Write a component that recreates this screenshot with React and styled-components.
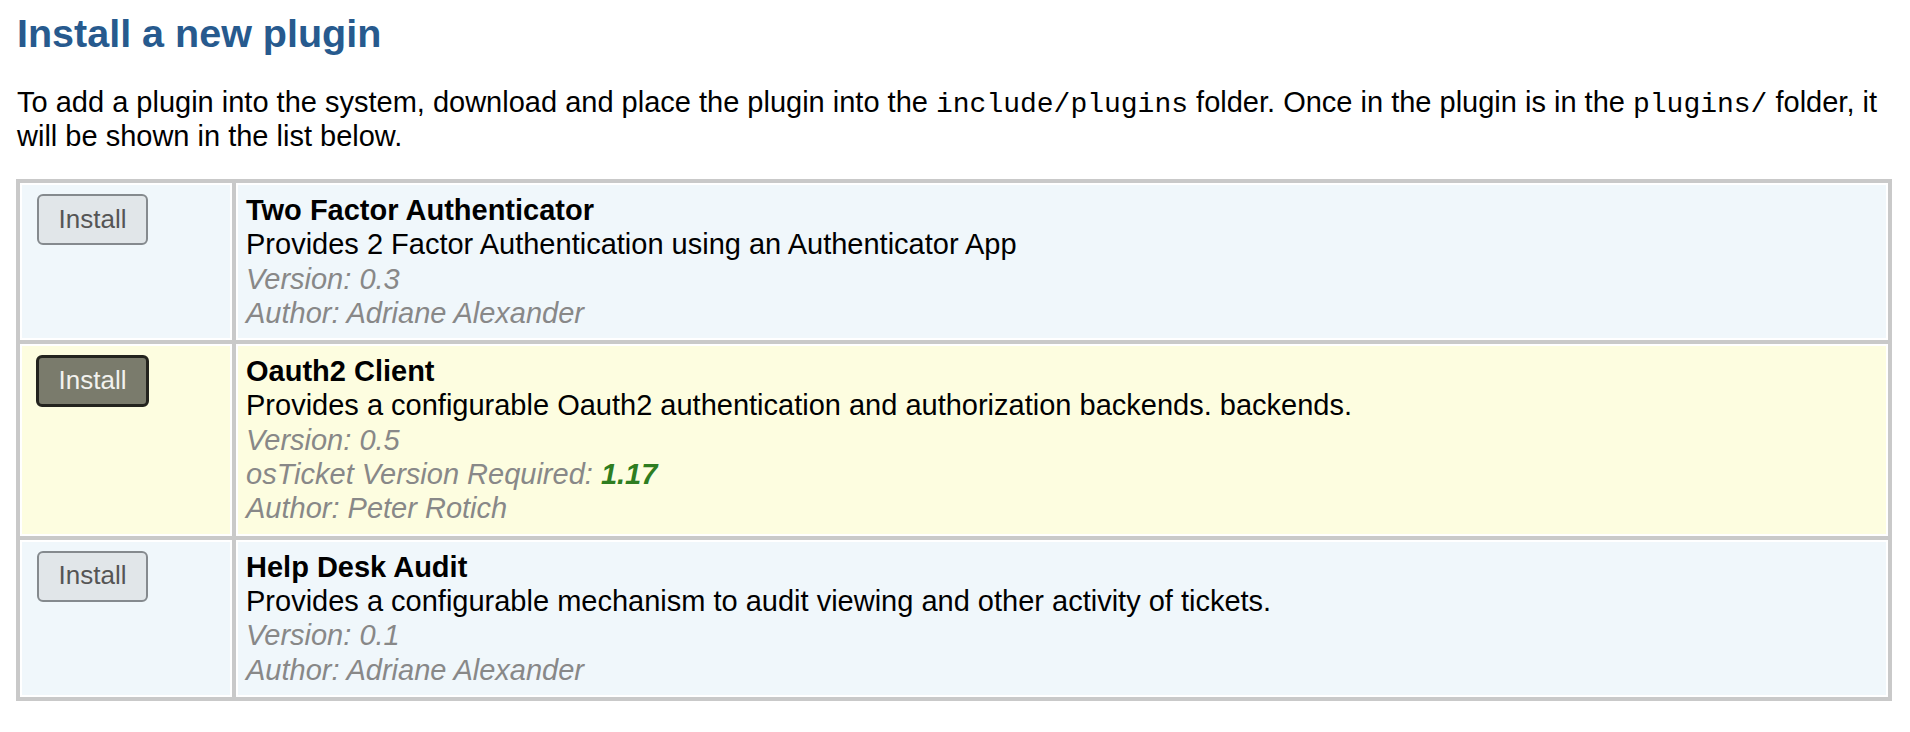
import React from "react";
import styled, { createGlobalStyle } from "styled-components";

const GlobalStyle = createGlobalStyle`
  html, body { margin: 0; padding: 0; background: #ffffff; }
  body { font-family: "Liberation Sans", Arial, Helvetica, sans-serif; color: #000; }
`;

const Page = styled.div`
  padding: 10px 18px 0 16px;
`;

const Title = styled.h2`
  margin: 0 0 0 1px;
  font-size: 39.5px;
  line-height: 46px;
  font-weight: bold;
  color: #275a8e;
`;

const Intro = styled.p`
  margin: 29px 0 26px 1px;
  font-size: 29px;
  line-height: 34px;
`;

const Code = styled.code`
  font-family: "Liberation Mono", "Courier New", monospace;
  font-size: 28px;
  line-height: 0;
`;

const PluginTable = styled.div`
  display: grid;
  grid-template-columns: 212px 1fr;
  gap: 4px;
  padding: 4px;
  background: #c9c9c9;
`;

const Cell = styled.div`
  border: 2px solid #ffffff;
  padding: 8px;
  background: ${(p) => (p.$highlight ? "#fdfde0" : "#f0f7fb")};
  font-size: 29px;
  line-height: 34.3px;
`;

const ButtonCell = styled(Cell)`
  padding: 9px 8px 8px 15px;
`;

const InstallButton = styled.button`
  box-sizing: border-box;
  display: block;
  width: ${(p) => (p.$active ? "113px" : "111px")};
  height: ${(p) => (p.$active ? "52px" : "51px")};
  margin: ${(p) => (p.$active ? "0 0 0 -1px" : "0")};
  border-radius: 6px;
  border: ${(p) => (p.$active ? "3px solid #23231e" : "2px solid #858a8e")};
  background: ${(p) => (p.$active ? "#7a7b6c" : "#e1e6e9")};
  color: ${(p) => (p.$active ? "#f2f2ee" : "#555")};
  font-family: "Liberation Sans", Arial, Helvetica, sans-serif;
  font-size: 26px;
  line-height: 1;
  padding: 0 0 2px;
  cursor: pointer;
`;

const Name = styled.div`
  font-weight: bold;
`;

const Description = styled.div``;

const Meta = styled.div`
  font-style: italic;
  color: #888888;
`;

const Required = styled.strong`
  color: #2e7d21;
  font-weight: bold;
`;

const plugins = [
  {
    name: "Two Factor Authenticator",
    desc: "Provides 2 Factor Authentication using an Authenticator App",
    version: "0.3",
    author: "Adriane Alexander",
  },
  {
    name: "Oauth2 Client",
    desc: "Provides a configurable Oauth2 authentication and authorization backends. backends.",
    version: "0.5",
    required: "1.17",
    author: "Peter Rotich",
    highlight: true,
  },
  {
    name: "Help Desk Audit",
    desc: "Provides a configurable mechanism to audit viewing and other activity of tickets.",
    version: "0.1",
    author: "Adriane Alexander",
  },
];

export default function App() {
  return (
    <>
      <GlobalStyle />
      <Page>
        <Title>Install a new plugin</Title>
        <Intro>
          To add a plugin into the system, download and place the plugin into the{" "}
          <Code>include/plugins</Code> folder. Once in the plugin is in the{" "}
          <Code>plugins/</Code> folder, it will be shown in the list below.
        </Intro>
        <PluginTable>
          {plugins.map((p) => (
            <React.Fragment key={p.name}>
              <ButtonCell $highlight={p.highlight}>
                <InstallButton $active={p.highlight}>Install</InstallButton>
              </ButtonCell>
              <Cell $highlight={p.highlight}>
                <Name>{p.name}</Name>
                <Description>{p.desc}</Description>
                <Meta>Version: {p.version}</Meta>
                {p.required && (
                  <Meta>
                    osTicket Version Required: <Required>{p.required}</Required>
                  </Meta>
                )}
                <Meta>Author: {p.author}</Meta>
              </Cell>
            </React.Fragment>
          ))}
        </PluginTable>
      </Page>
    </>
  );
}
